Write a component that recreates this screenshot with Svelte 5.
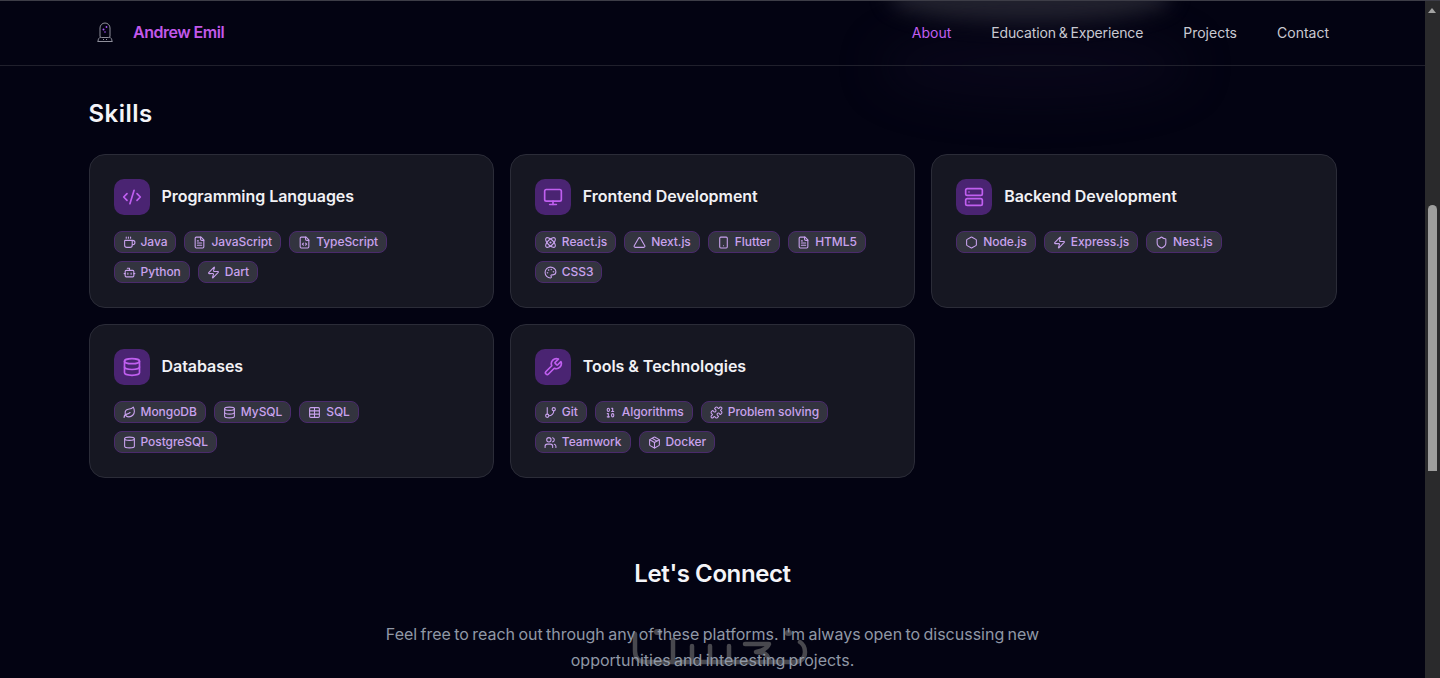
<script>
  const p = {
    code: '<path d="m18 16 4-4-4-4"/><path d="m6 8-4 4 4 4"/><path d="m14.5 4-5 16"/>',
    monitor: '<rect width="20" height="14" x="2" y="3" rx="2"/><line x1="8" x2="16" y1="21" y2="21"/><line x1="12" x2="12" y1="17" y2="21"/>',
    server: '<rect width="20" height="8" x="2" y="2" rx="2"/><rect width="20" height="8" x="2" y="14" rx="2"/><line x1="6" x2="6.01" y1="6" y2="6"/><line x1="6" x2="6.01" y1="18" y2="18"/>',
    database: '<ellipse cx="12" cy="5" rx="9" ry="3"/><path d="M3 5v14a9 3 0 0 0 18 0V5"/><path d="M3 12a9 3 0 0 0 18 0"/>',
    wrench: '<path d="M14.7 6.3a1 1 0 0 0 0 1.4l1.6 1.6a1 1 0 0 0 1.4 0l3.77-3.77a6 6 0 0 1-7.94 7.94l-6.91 6.91a2.12 2.12 0 0 1-3-3l6.91-6.91a6 6 0 0 1 7.94-7.94l-3.76 3.76z"/>',
    coffee: '<path d="M10 2v2"/><path d="M14 2v2"/><path d="M16 8a1 1 0 0 1 1 1v8a4 4 0 0 1-4 4H7a4 4 0 0 1-4-4V9a1 1 0 0 1 1-1h14a4 4 0 1 1 0 8h-1"/><path d="M6 2v2"/>',
    file: '<path d="M15 2H6a2 2 0 0 0-2 2v16a2 2 0 0 0 2 2h12a2 2 0 0 0 2-2V7Z"/><path d="M14 2v4a2 2 0 0 0 2 2h4"/><path d="M10 9H8"/><path d="M16 13H8"/><path d="M16 17H8"/>',
    filecode: '<path d="M15 2H6a2 2 0 0 0-2 2v16a2 2 0 0 0 2 2h12a2 2 0 0 0 2-2V7Z"/><path d="M14 2v4a2 2 0 0 0 2 2h4"/><path d="m10 13-2 2 2 2"/><path d="m14 17 2-2-2-2"/>',
    bot: '<path d="M12 8V4H8"/><rect width="16" height="12" x="4" y="8" rx="2"/><path d="M2 14h2"/><path d="M20 14h2"/><path d="M15 13v2"/><path d="M9 13v2"/>',
    zap: '<path d="M4 14a1 1 0 0 1-.78-1.63l9.9-10.2a.5.5 0 0 1 .86.46l-1.92 6.02A1 1 0 0 0 13 10h7a1 1 0 0 1 .78 1.63l-9.9 10.2a.5.5 0 0 1-.86-.46l1.92-6.02A1 1 0 0 0 11 14z"/>',
    atom: '<circle cx="12" cy="12" r="1"/><path d="M20.2 20.2c2.04-2.03.02-7.36-4.5-11.9-4.54-4.52-9.87-6.54-11.9-4.5-2.04 2.03-.02 7.36 4.5 11.9 4.54 4.52 9.87 6.54 11.9 4.5Z"/><path d="M15.7 15.7c4.52-4.54 6.54-9.87 4.5-11.9-2.03-2.04-7.36-.02-11.9 4.5-4.52 4.54-6.54 9.87-4.5 11.9 2.03 2.04 7.36.02 11.9-4.5Z"/>',
    triangle: '<path d="M13.73 4a2 2 0 0 0-3.46 0l-8 14A2 2 0 0 0 4 21h16a2 2 0 0 0 1.73-3Z"/>',
    phone: '<rect width="14" height="20" x="5" y="2" rx="2" ry="2"/><path d="M12 18h.01"/>',
    palette: '<circle cx="13.5" cy="6.5" r=".5" fill="currentColor"/><circle cx="17.5" cy="10.5" r=".5" fill="currentColor"/><circle cx="8.5" cy="7.5" r=".5" fill="currentColor"/><circle cx="6.5" cy="12.5" r=".5" fill="currentColor"/><path d="M12 2C6.5 2 2 6.5 2 12s4.5 10 10 10c.926 0 1.648-.746 1.648-1.688 0-.437-.18-.835-.437-1.125-.29-.289-.438-.652-.438-1.125a1.64 1.64 0 0 1 1.668-1.668h1.996c3.051 0 5.555-2.503 5.555-5.554C21.965 6.012 17.461 2 12 2z"/>',
    hexagon: '<path d="M21 16V8a2 2 0 0 0-1-1.73l-7-4a2 2 0 0 0-2 0l-7 4A2 2 0 0 0 3 8v8a2 2 0 0 0 1 1.73l7 4a2 2 0 0 0 2 0l7-4A2 2 0 0 0 21 16z"/>',
    shield: '<path d="M20 13c0 5-3.5 7.5-7.66 8.95a1 1 0 0 1-.67-.01C7.5 20.5 4 18 4 13V6a1 1 0 0 1 1-1c2 0 4.5-1.2 6.24-2.72a1.17 1.17 0 0 1 1.52 0C14.51 3.81 17 5 19 5a1 1 0 0 1 1 1z"/>',
    leaf: '<path d="M11 20A7 7 0 0 1 9.8 6.1C15.5 5 17 4.48 19 2c1 2 2 4.18 2 8 0 5.5-4.78 10-10 10Z"/><path d="M2 21c0-3 1.85-5.36 5.08-6C9.5 14.52 12 13 13 12"/>',
    table: '<path d="M12 3v18"/><rect width="18" height="18" x="3" y="3" rx="2"/><path d="M3 9h18"/><path d="M3 15h18"/>',
    cylinder: '<ellipse cx="12" cy="5" rx="9" ry="3"/><path d="M3 5v14a9 3 0 0 0 18 0V5"/>',
    git: '<line x1="6" x2="6" y1="3" y2="15"/><circle cx="18" cy="6" r="3"/><circle cx="6" cy="18" r="3"/><path d="M18 9a9 9 0 0 1-9 9"/>',
    binary: '<rect x="14" y="14" width="4" height="6" rx="2"/><rect x="6" y="4" width="4" height="6" rx="2"/><path d="M6 20h4"/><path d="M14 10h4"/><path d="M6 14h2v6"/><path d="M14 4h2v6"/>',
    puzzle: '<path d="M19.439 7.85c-.049.322.059.648.289.878l1.568 1.568c.47.47.706 1.087.706 1.704s-.235 1.233-.706 1.704l-1.611 1.611a.98.98 0 0 1-.837.276c-.47-.07-.802-.48-.968-.925a2.501 2.501 0 1 0-3.214 3.214c.446.166.855.497.925.968a.979.979 0 0 1-.276.837l-1.61 1.61a2.404 2.404 0 0 1-1.705.707 2.402 2.402 0 0 1-1.704-.706l-1.568-1.568a1.026 1.026 0 0 0-.877-.29c-.493.074-.84.504-1.02.968a2.5 2.5 0 1 1-3.237-3.237c.464-.18.894-.527.967-1.02a1.026 1.026 0 0 0-.289-.877l-1.568-1.568A2.402 2.402 0 0 1 1.998 12c0-.617.236-1.234.706-1.704L4.23 8.77c.24-.24.581-.353.917-.303.515.077.877.528 1.073 1.01a2.5 2.5 0 1 0 3.259-3.259c-.482-.196-.933-.558-1.01-1.073-.05-.336.062-.676.303-.917l1.525-1.525A2.402 2.402 0 0 1 12 1.998c.617 0 1.234.236 1.704.706l1.568 1.568c.23.23.556.338.877.29.493-.074.84-.504 1.02-.968a2.5 2.5 0 1 1 3.237 3.237c-.464.18-.894.527-.967 1.02Z"/>',
    users: '<path d="M16 21v-2a4 4 0 0 0-4-4H6a4 4 0 0 0-4 4v2"/><circle cx="9" cy="7" r="4"/><path d="M22 21v-2a4 4 0 0 0-3-3.87"/><path d="M16 3.13a4 4 0 0 1 0 7.75"/>',
    box: '<path d="M11 21.73a2 2 0 0 0 2 0l7-4A2 2 0 0 0 21 16V8a2 2 0 0 0-1-1.73l-7-4a2 2 0 0 0-2 0l-7 4A2 2 0 0 0 3 8v8a2 2 0 0 0 1 1.73z"/><path d="M12 22V12"/><path d="m3.3 7 8.7 5 8.7-5"/><path d="m7.5 4.27 9 5.15"/>'
  };
  const groups = [
    { title: 'Programming Languages', icon: 'code', items: [['coffee','Java'],['file','JavaScript'],['filecode','TypeScript'],['bot','Python'],['zap','Dart']] },
    { title: 'Frontend Development', icon: 'monitor', items: [['atom','React.js'],['triangle','Next.js'],['phone','Flutter'],['file','HTML5'],['palette','CSS3']] },
    { title: 'Backend Development', icon: 'server', items: [['hexagon','Node.js'],['zap','Express.js'],['shield','Nest.js']] },
    { title: 'Databases', icon: 'database', items: [['leaf','MongoDB'],['database','MySQL'],['table','SQL'],['cylinder','PostgreSQL']] },
    { title: 'Tools & Technologies', icon: 'wrench', items: [['git','Git'],['binary','Algorithms'],['puzzle','Problem solving'],['users','Teamwork'],['box','Docker']] }
  ];
  const links = ['About', 'Education & Experience', 'Projects', 'Contact'];
</script>

<div class="page">
  <div class="glow"></div>
  <div class="glow-low"></div>
  <header class="nav">
    <div class="brand">
      <svg class="logo" viewBox="0 0 18 22" width="18" height="22" fill="none" stroke="#8f8f9b" stroke-width="1">
        <path d="M4 15V7a5 5 0 0 1 10 0v8c0 1-1 1.500-2 1.500H6c-1 0-2-.5-2-1.500z"/>
        <path d="M2 20.500c0-2.500 1-4 3-4.500M16 20.500c0-2.500-1-4-3-4.500M1.500 20.500h15"/>
        <path d="M7 18.500h1M10 18.500h1"/>
        <circle cx="7.500" cy="8.500" r="1" fill="#a855f7" stroke="none"/>
        <circle cx="10.500" cy="6" r=".9" fill="#a855f7" stroke="none"/>
        <circle cx="9" cy="11" r=".8" fill="#a855f7" stroke="none"/>
      </svg>
      <span class="name">Andrew Emil</span>
    </div>
    <nav class="links">
      {#each links as l, i}
        <a href="#top" class:active={i === 0}>{l}</a>
      {/each}
    </nav>
  </header>

  <main class="wrap">
    <h2 class="skills-title">Skills</h2>
    <div class="grid">
      {#each groups as g}
        <section class="card">
          <div class="head">
            <div class="badge">
              <svg viewBox="0 0 24 24" width="20" height="20" fill="none" stroke="currentColor" stroke-width="2" stroke-linecap="round" stroke-linejoin="round">{@html p[g.icon]}</svg>
            </div>
            <h3>{g.title}</h3>
          </div>
          <div class="chips">
            {#each g.items as it}
              <span class="chip">
                <svg viewBox="0 0 24 24" width="13" height="13" fill="none" stroke="currentColor" stroke-width="2" stroke-linecap="round" stroke-linejoin="round">{@html p[it[0]]}</svg>
                <span class="label">{it[1]}</span>
              </span>
            {/each}
          </div>
        </section>
      {/each}
    </div>

    <section class="connect">
      <h2>Let's Connect</h2>
      <div class="copy">
        <svg class="mark" viewBox="0 0 176 38" width="176" height="38" fill="none" stroke="#48484e" stroke-width="4.500" stroke-linecap="round" stroke-linejoin="round">
          <path d="M3 6v17c0 7 4 11 11 11h148c7 0 11-4 11-10 0-5-2-8-5-10"/>
          <path d="M41 12v22M60 18v16M78 18v16M97 18v16"/>
          <path d="M113 16h24c-2 5-7 7-13 8 8 0 13 3 13 10"/>
          <path d="M27 4l-2 0" stroke-width="6"/>
          <path d="M157 5l-1 0" stroke-width="6"/>
        </svg>
        <p>Feel free to reach out through any of these platforms. I'm always open to discussing new opportunities and interesting projects.</p>
      </div>
    </section>
  </main>

  <aside class="scrollbar">
    <i class="arrow"></i>
    <i class="thumb"></i>
  </aside>
</div>

<style>
  :global(html), :global(body) {
    margin: 0;
    height: 678px;
    overflow: hidden;
    background: #030312;
  }
  .page {
    position: relative;
    width: 1440px;
    height: 678px;
    box-sizing: border-box;
    padding-right: 15px;
    overflow: hidden;
    background: #030312;
    border-top: 1px solid #3d3d47;
    font-family: Inter, "Liberation Sans", sans-serif;
    color: #f4f4f8;
  }
  .glow {
    position: absolute;
    left: 888px;
    top: -30px;
    width: 284px;
    height: 52px;
    border-radius: 50%;
    background: #2a2a36;
    filter: blur(10px);
    opacity: .8;
  }
  .glow-low {
    position: absolute;
    left: 880px;
    top: 30px;
    width: 310px;
    height: 70px;
    border-radius: 50%;
    background: #0e0a20;
    filter: blur(22px);
    opacity: .5;
  }
  .nav {
    position: relative;
    height: 64px;
    display: flex;
    align-items: center;
    justify-content: space-between;
    padding: 0 96px;
    border-bottom: 1px solid #20202c;
  }
  .brand {
    display: flex;
    align-items: center;
    gap: 19px;
  }
  .logo { display: block; margin-top: -2px; }
  .name {
    font-size: 16px;
    font-weight: 600;
    letter-spacing: -.5px;
    color: #c258ea;
    padding-bottom: 2px;
  }
  .links {
    display: flex;
    gap: 40px;
    padding-bottom: 2px;
  }
  .links a {
    font-size: 14px;
    font-weight: 400;
    color: #c9c9d1;
    text-decoration: none;
  }
  .links a:nth-child(2) {
    letter-spacing: -.14px;
    word-spacing: -1px;
  }
  .links a.active { color: #c05ff0; }
  .wrap {
    position: relative;
    width: 1248px;
    margin: 0 0 0 88.5px;
  }
  .skills-title {
    margin: 32px 0 24px;
    font-size: 24px;
    line-height: 32px;
    font-weight: 600;
    letter-spacing: .5px;
    color: #f4f4f8;
  }
  .grid {
    display: grid;
    grid-template-columns: repeat(3, 1fr);
    gap: 16px;
  }
  .card {
    height: 154px;
    box-sizing: border-box;
    padding: 24px;
    background: #161722;
    border: 1px solid #2b2c38;
    border-radius: 16px;
  }
  .head {
    display: flex;
    align-items: center;
    gap: 12px;
    margin-bottom: 16px;
  }
  .badge {
    width: 36px;
    height: 36px;
    display: flex;
    align-items: center;
    justify-content: center;
    border-radius: 10px;
    background: #4a2472;
    color: #c05ff0;
  }
  h3 {
    margin: 0;
    padding-bottom: 2px;
    font-size: 16px;
    font-weight: 600;
    line-height: 24px;
    letter-spacing: -.05px;
    color: #f1f1f5;
  }
  .chips {
    display: flex;
    flex-wrap: wrap;
    gap: 8px;
  }
  .chip {
    display: inline-flex;
    align-items: center;
    gap: 5px;
    height: 22px;
    box-sizing: border-box;
    padding: 0 8px;
    border: 1px solid #4a2a6c;
    border-radius: 8px;
    background: #33343f;
    color: #c9a2ee;
    font-size: 12px;
    font-weight: 500;
    letter-spacing: -.05px;
  }
  .chip svg { flex: none; }
  .label { padding-bottom: 2px; }
  .connect {
    margin-top: 80px;
    text-align: center;
  }
  .connect h2 {
    margin: 0 0 31px;
    font-size: 24px;
    line-height: 32px;
    font-weight: 600;
    letter-spacing: -.4px;
    color: #f4f4f8;
  }
  .copy {
    position: relative;
    width: 672px;
    margin: 0 auto;
  }
  .mark {
    position: absolute;
    left: 255px;
    top: 7px;
  }
  .copy p {
    position: relative;
    margin: 0;
    font-size: 16px;
    line-height: 26px;
    word-spacing: -1.150px;
    color: #9098a6;
  }
  .scrollbar {
    position: absolute;
    right: 0;
    top: 0;
    width: 15px;
    height: 100%;
    background: #2a2a2c;
  }
  .arrow {
    position: absolute;
    left: 3px;
    top: 7px;
    border-left: 4.500px solid transparent;
    border-right: 4.500px solid transparent;
    border-bottom: 5px solid #a3a3a3;
  }
  .thumb {
    position: absolute;
    left: 3px;
    top: 204px;
    width: 9px;
    height: 266px;
    border-radius: 5px 5px 0 0;
    background: #9e9e9e;
  }
</style>
